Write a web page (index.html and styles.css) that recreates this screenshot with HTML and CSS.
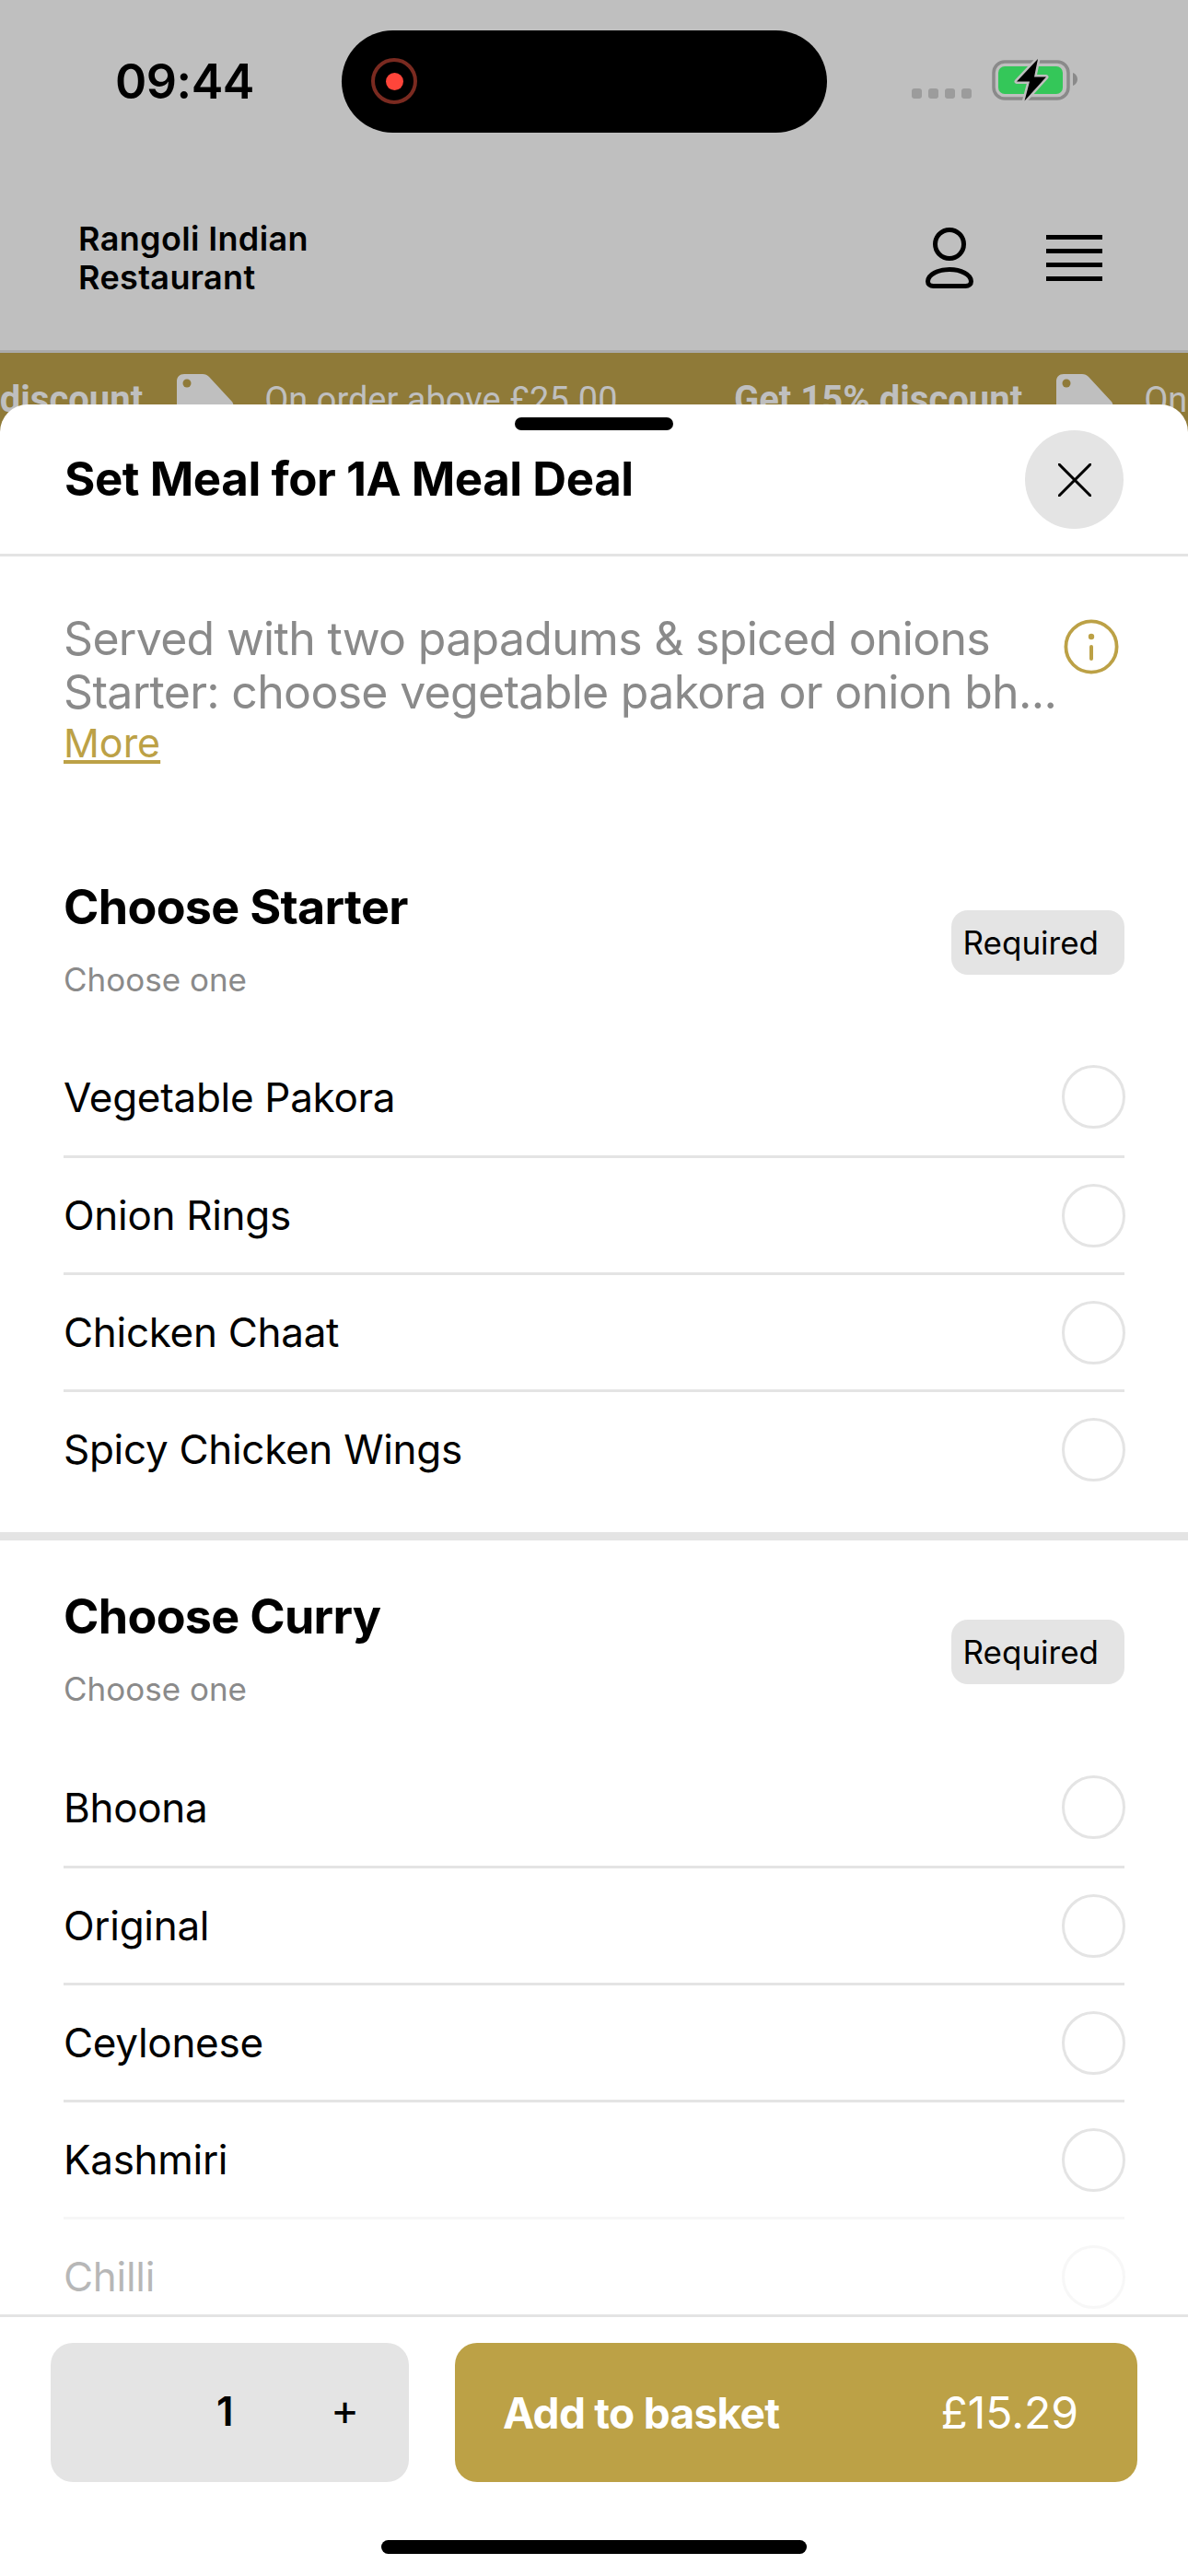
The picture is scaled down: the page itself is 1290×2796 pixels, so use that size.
FILE: index.html
```html
<!DOCTYPE html>
<html lang="en">
<head>
    <meta charset="UTF-8">
    <meta name="viewport" content="width=device-width, initial-scale=1.0">
    <title>Set Meal for 1A Meal Deal</title>
    <link rel="stylesheet" href="styles.css">
</head>
<body>
    <div class="phone">
        <div class="status-bar">
            <div class="time">09:44</div>
            <div class="island">
                <span class="rec"><span class="rec-dot"></span></span>
            </div>
            <div class="status-right">
                <div class="signal"><span></span><span></span><span></span><span></span></div>
                <svg class="battery" viewBox="0 0 95 46" width="95" height="46">
                    <rect x="2" y="3" width="81" height="40" rx="12" fill="none" stroke="#8a8a8a" stroke-width="3.5"/>
                    <rect x="7" y="8" width="70" height="30" rx="7" fill="#34c759"/>
                    <path d="M88 15 C91 16 93 19 93 22 C93 25 91 28 88 29 Z" fill="#8a8a8a"/>
                    <path d="M50 0 L27 24.5 H41 L35.5 45.5 L59 19.5 H46 Z" fill="#000" stroke="#bfbfbf" stroke-width="5" stroke-linejoin="round" paint-order="stroke"/>
                </svg>
            </div>
        </div>

        <header class="site-header">
            <div class="site-name">Rangoli Indian<br>Restaurant</div>
            <div class="header-icons">
                <svg class="icon-user" viewBox="0 0 52 66" width="52" height="66">
                    <circle cx="26" cy="18" r="15.5" fill="none" stroke="#000" stroke-width="5"/>
                    <path d="M8.5 63.5 H43.5 C47 63.5 49.5 61.5 49.5 58.5 C49.5 51 38.5 45.5 26 45.5 C13.5 45.5 2.5 51 2.5 58.5 C2.5 61.5 5 63.5 8.5 63.5 Z" fill="none" stroke="#000" stroke-width="5"/>
                </svg>
                <div class="burger"><span></span><span></span><span></span><span></span></div>
            </div>
        </header>

        <div class="promo">
            <div class="promo-item">
                <b>Get 15% discount</b>
                <svg class="tag" viewBox="0 0 62 70" width="62" height="70">
                    <path d="M8 0 H28 C31 0 33 1 35 3 L60 30 C62 33 62 36 60 38 L38 66 C35 69 31 69 28 66 L3 40 C1 38 0 36 0 33 V8 C0 3 3 0 8 0 Z" fill="#bfbfbf"/>
                    <circle cx="11" cy="10" r="4.5" fill="#8f7a38"/>
                </svg>
                <span>On order above £25.00</span>
            </div>
            <div class="promo-item">
                <b>Get 15% discount</b>
                <svg class="tag" viewBox="0 0 62 70" width="62" height="70">
                    <path d="M8 0 H28 C31 0 33 1 35 3 L60 30 C62 33 62 36 60 38 L38 66 C35 69 31 69 28 66 L3 40 C1 38 0 36 0 33 V8 C0 3 3 0 8 0 Z" fill="#bfbfbf"/>
                    <circle cx="11" cy="10" r="4.5" fill="#8f7a38"/>
                </svg>
                <span>On order above £25.00</span>
            </div>
        </div>

        <div class="sheet">
            <div class="handle"></div>
            <div class="sheet-head">
                <h1>Set Meal for 1A Meal Deal</h1>
                <div class="close">
                    <svg viewBox="0 0 36 36" width="36" height="36">
                        <path d="M1 1 L35 35 M35 1 L1 35" stroke="#000" stroke-width="3" stroke-linecap="round"/>
                    </svg>
                </div>
            </div>

            <div class="sheet-body">
                <div class="desc">
                    <div class="desc-text">
                        <p>Served with two papadums &amp; spiced onions</p>
                        <p>Starter: choose vegetable pakora or onion bh...</p>
                        <a class="more">More</a>
                    </div>
                    <svg class="info" viewBox="0 0 60 60" width="60" height="60">
                        <circle cx="30" cy="30" r="27.6" fill="none" stroke="#bca146" stroke-width="3.8"/>
                        <circle cx="30" cy="19" r="3.2" fill="#bca146"/>
                        <rect x="28" y="28" width="4" height="17" rx="2" fill="#bca146"/>
                    </svg>
                </div>

                <section class="group">
                    <div class="group-head">
                        <div>
                            <h2>Choose Starter</h2>
                            <div class="hint">Choose one</div>
                        </div>
                        <span class="badge">Required</span>
                    </div>
                    <div class="option"><span>Vegetable Pakora</span><i class="radio"></i></div>
                    <div class="option"><span>Onion Rings</span><i class="radio"></i></div>
                    <div class="option"><span>Chicken Chaat</span><i class="radio"></i></div>
                    <div class="option"><span>Spicy Chicken Wings</span><i class="radio"></i></div>
                </section>

                <section class="group group-second">
                    <div class="group-head">
                        <div>
                            <h2>Choose Curry</h2>
                            <div class="hint">Choose one</div>
                        </div>
                        <span class="badge">Required</span>
                    </div>
                    <div class="option"><span>Bhoona</span><i class="radio"></i></div>
                    <div class="option"><span>Original</span><i class="radio"></i></div>
                    <div class="option"><span>Ceylonese</span><i class="radio"></i></div>
                    <div class="option"><span>Kashmiri</span><i class="radio"></i></div>
                    <div class="option faded"><span>Chilli</span><i class="radio"></i></div>
                </section>
            </div>

            <div class="sheet-foot">
                <div class="stepper"><span class="qty">1</span><span class="plus">+</span></div>
                <div class="add-btn"><b>Add to basket</b><span>£15.29</span></div>
            </div>
            <div class="home-bar"></div>
        </div>
    </div>
</body>
</html>
```

FILE: styles.css
```css
* {
    box-sizing: border-box;
}
body {
    margin: 0;
    background-color: #fff;
    font-family: Inter, "Liberation Sans", sans-serif;
    color: #000;
}
.phone {
    width: 1290px;
    height: 2796px;
    overflow: hidden;
    background-color: #bfbfbf;
}

/* status bar */
.status-bar {
    height: 190px;
    padding-top: 33px;
    display: grid;
    grid-template-columns: 371px 527px 1fr;
}
.time {
    padding: 26px 0 0 125px;
    font-size: 52px;
    line-height: 60px;
    font-weight: 600;
    letter-spacing: -0.5px;
}
.island {
    height: 111px;
    background-color: #000;
    border-radius: 56px;
    padding: 30px 0 0 32px;
}
.rec {
    display: flex;
    align-items: center;
    justify-content: center;
    width: 50px;
    height: 50px;
    border: 4px solid #7a2a20;
    border-radius: 50%;
}
.rec-dot {
    width: 19px;
    height: 19px;
    background-color: #ff453a;
    border-radius: 50%;
}
.status-right {
    display: flex;
    align-items: flex-start;
    padding: 31px 0 0 92px;
}
.signal {
    display: flex;
    gap: 7px;
    margin: 32px 22px 0 0;
}
.signal span {
    width: 11px;
    height: 11px;
    background-color: #9c9c9c;
    border-radius: 3px;
}

/* restaurant header */
.site-header {
    height: 193px;
    border-bottom: 3px solid #aaa;
    padding: 48px 93px 0 85px;
    display: flex;
    justify-content: space-between;
    align-items: flex-start;
}
.site-name {
    font-size: 36px;
    line-height: 42px;
    font-weight: 600;
    letter-spacing: 0.35px;
}
.header-icons {
    display: flex;
    gap: 79px;
    padding-top: 9px;
}
.burger {
    width: 61px;
    margin-top: 8px;
    display: flex;
    flex-direction: column;
    gap: 10px;
}
.burger span {
    height: 5px;
    background-color: #000;
}

/* offer strip */
.promo {
    height: 86px;
    background-color: #8f7a38;
    color: #bfbfbf;
    font-family: Roboto, sans-serif;
    font-size: 38px;
    display: flex;
    overflow: hidden;
    padding-top: 23px;
}
.promo-item {
    flex: none;
    width: 955px;
    display: flex;
    align-items: flex-start;
    margin-left: -158px;
    margin-right: 158px;
    white-space: nowrap;
}
.promo-item b {
    font-size: 40px;
    font-weight: 700;
    margin-top: 4px;
}
.promo-item span {
    margin-top: 6px;
}
.tag {
    flex: none;
    margin: 0 33px 0 37px;
}

/* bottom sheet */
.sheet {
    position: relative;
    margin-top: -30px;
    height: 2387px;
    background-color: #fff;
    border-radius: 30px 30px 0 0;
}
.handle {
    position: absolute;
    top: 14px;
    left: 559px;
    width: 172px;
    height: 14px;
    background-color: #000;
    border-radius: 7px;
}
.sheet-head {
    height: 165px;
    border-bottom: 3px solid #e4e4e4;
    padding: 28px 70px 0;
    display: flex;
    justify-content: space-between;
    align-items: flex-start;
}
.sheet-head h1 {
    margin: 0;
    padding-top: 23px;
    font-size: 51px;
    line-height: 60px;
    font-weight: 700;
    letter-spacing: -0.45px;
}
.close {
    width: 107px;
    height: 107px;
    border-radius: 50%;
    background-color: #e4e4e4;
    display: flex;
    align-items: center;
    justify-content: center;
}
.sheet-body {
    height: 1908px;
    overflow: hidden;
}
.desc {
    position: relative;
    height: 351px;
    padding: 60px 70px 0 69px;
    font-size: 50px;
    line-height: 58px;
    letter-spacing: -0.7px;
    color: #8a8a8a;
}
.desc p {
    margin: 0;
    white-space: nowrap;
}
.more {
    display: block;
    font-size: 43px;
    line-height: 52px;
    letter-spacing: 0;
    color: #bca146;
    text-decoration: underline;
}
.info {
    position: absolute;
    top: 68px;
    left: 1155px;
}

/* option groups */
.group {
    padding: 0 69px;
}
.group-second {
    margin-top: 28px;
    border-top: 9px solid #e4e4e4;
    padding-top: 53px;
}
.group-head {
    display: flex;
    justify-content: space-between;
    align-items: flex-start;
    margin-bottom: 44px;
}
.group-second .group-head {
    margin-bottom: 45px;
}
.group-head h2 {
    margin: 0;
    font-size: 52px;
    line-height: 60px;
    font-weight: 700;
    letter-spacing: -0.7px;
}
.hint {
    margin-top: 28px;
    font-size: 35px;
    line-height: 40px;
    color: #8a8a8a;
}
.badge {
    margin: 33px 0 0 0;
    padding: 0 28px 0 13px;
    height: 70px;
    line-height: 70px;
    font-size: 35px;
    background-color: #e4e4e4;
    border-radius: 18px;
}
.option {
    height: 127px;
    border-top: 3px solid #e4e4e4;
    display: flex;
    justify-content: space-between;
    align-items: center;
    font-size: 44px;
    letter-spacing: -0.3px;
}
.group-head + .option {
    border-top: 0;
}
.radio {
    display: block;
    width: 69px;
    height: 69px;
    margin-right: -1px;
    border: 3px solid #e4e4e4;
    border-radius: 50%;
}
.faded {
    opacity: 0.28;
}

/* sticky footer */
.sheet-foot {
    border-top: 3px solid #e4e4e4;
    padding: 28px 55px 0;
    display: flex;
    gap: 50px;
}
.stepper {
    position: relative;
    width: 389px;
    height: 151px;
    background-color: #e4e4e4;
    border-radius: 24px;
}
.qty {
    position: absolute;
    left: 180px;
    top: 48px;
    font-size: 44px;
    line-height: 52px;
    font-weight: 600;
}
.plus {
    position: absolute;
    left: 304px;
    top: 46px;
    font-size: 47px;
    line-height: 52px;
}
.add-btn {
    width: 741px;
    height: 151px;
    background-color: #bca146;
    border-radius: 24px;
    color: #fff;
    padding: 0 64px 0 52px;
    display: flex;
    justify-content: space-between;
    align-items: center;
    font-size: 48px;
}
.add-btn b {
    font-size: 46px;
    font-weight: 700;
    letter-spacing: -0.7px;
}
.home-bar {
    position: absolute;
    left: 414px;
    top: 2318px;
    width: 462px;
    height: 15px;
    background-color: #000;
    border-radius: 8px;
}
```
